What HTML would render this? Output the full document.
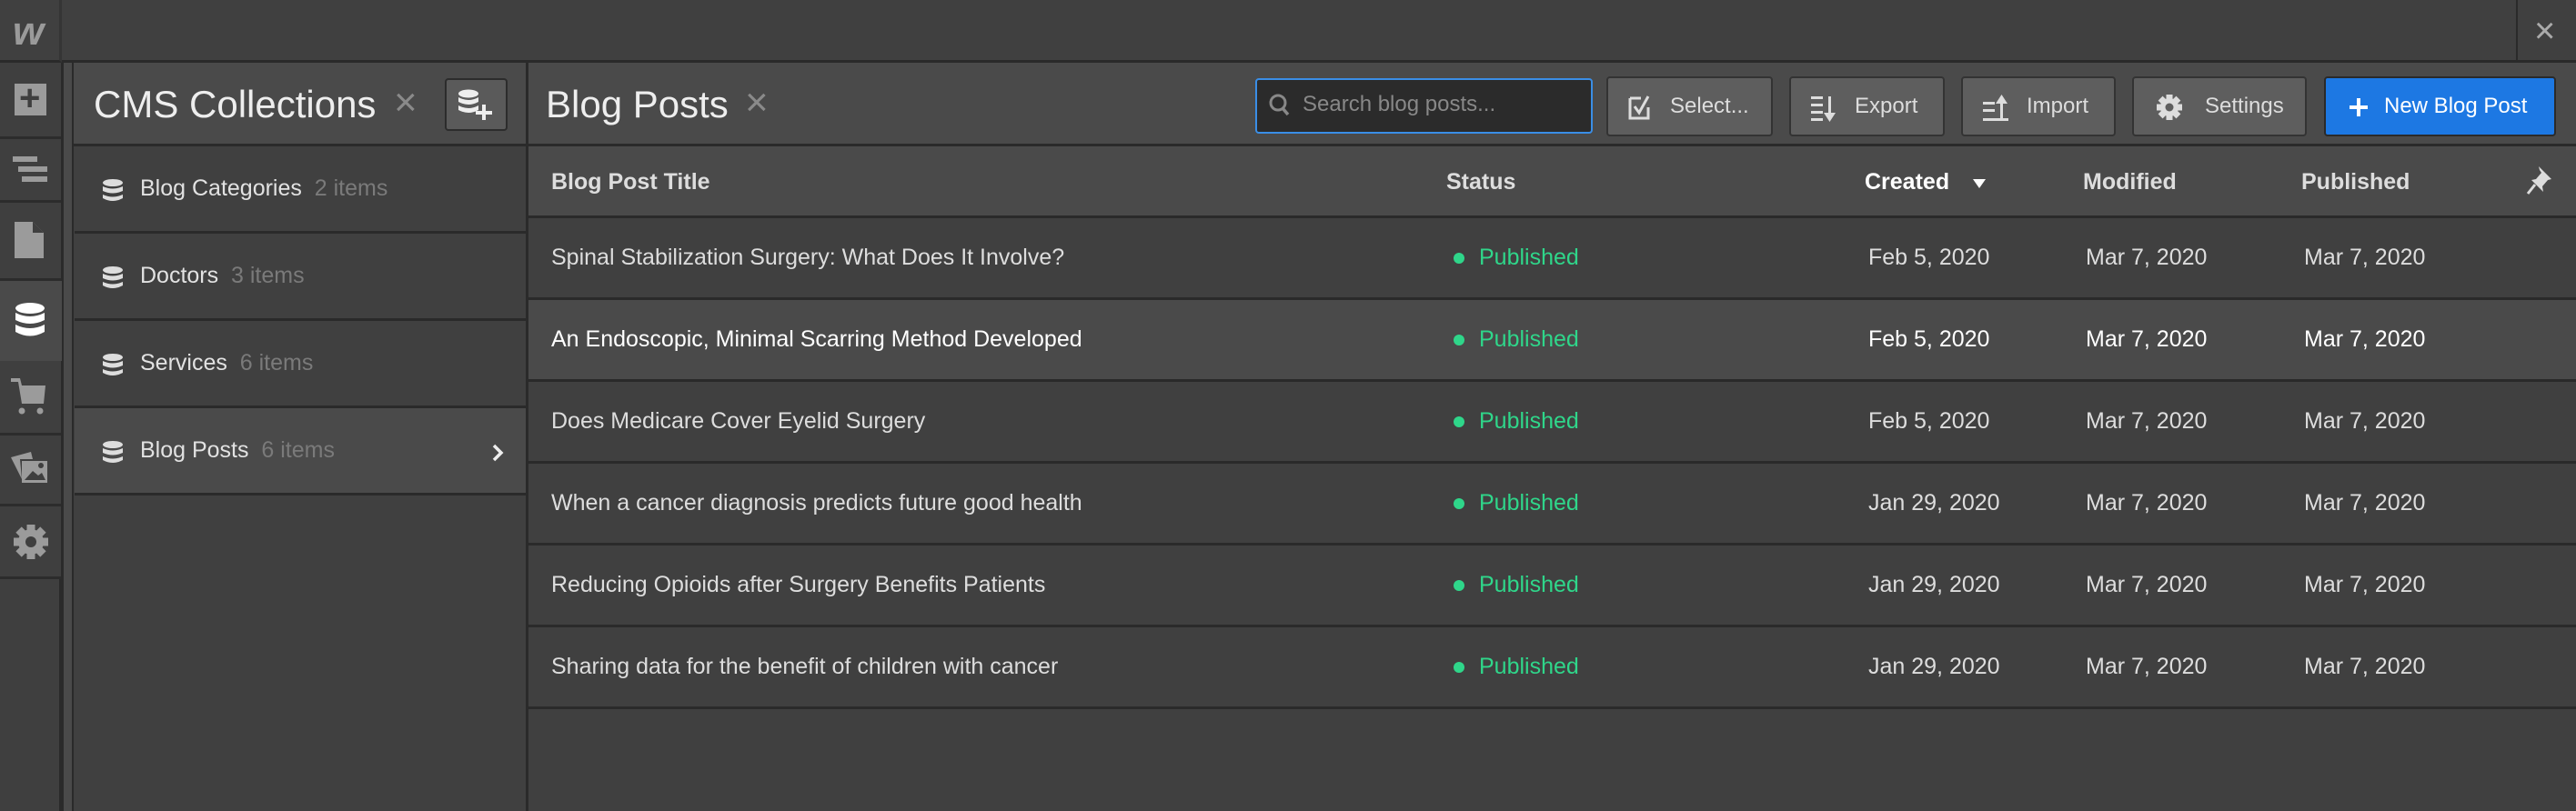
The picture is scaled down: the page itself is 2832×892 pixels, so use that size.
<!DOCTYPE html>
<html><head><meta charset="utf-8"><style>
*{box-sizing:border-box;margin:0;padding:0}
body{width:2832px;height:892px;background:#404040;font-family:"Liberation Sans",sans-serif;position:relative;overflow:hidden;color:#e6e6e6}
.a{position:absolute}
.t{position:absolute;white-space:nowrap}
.btn{position:absolute;top:84px;height:66px;background:#5e5e5e;border:2px solid #333;border-radius:4px;color:#ddd;font-size:24px;line-height:62px}
.row{position:absolute;left:581px;right:0;height:90px;border-bottom:3px solid #2a2a2a}
.row span{position:absolute;top:0;line-height:87px;font-size:25px;color:#ddd;white-space:nowrap}
.dot{position:absolute;left:1017px;top:38px;width:12px;height:12px;border-radius:50%;background:#2fd68a}
.tile{position:absolute;left:0;width:67px;border-bottom:3px solid #2c2c2c;background:#3f3f3f}
.li{position:absolute;left:82px;width:496px;height:96px;border-bottom:3px solid #2a2a2a;font-size:25px;line-height:93px}
.li b{font-weight:normal;color:#e2e2e2;position:absolute;left:72px}
.li i{font-style:normal;color:#7a7a7a}
</style></head><body>
<div class="a" style="left:0;top:0;width:2832px;height:69px;background:#404040;border-bottom:3px solid #2a2a2a"></div>
<div class="a" style="left:0;top:0;width:68px;height:69px;border-right:3px solid #353535;border-bottom:3px solid #2a2a2a"></div>
<div class="t" style="left:14px;top:10px;font-size:44px;font-weight:bold;font-style:italic;color:#9a9a9a;letter-spacing:-3px">w</div>
<div class="a" style="left:2766px;top:0;width:2px;height:69px;background:#2a2a2a"></div>
<div class="t" style="left:2786px;top:12px;font-size:40px;color:#aaa">×</div>
<div class="a" style="left:0;top:69px;width:68px;height:823px;background:#3f3f3f;border-right:3px solid #2a2a2a"></div>
<div class="tile" style="top:69px;height:84px"></div>
<div class="a" style="left:16px;top:92px;width:35px;height:35px;background:#9b9b9b"></div>
<div class="t" style="left:21px;top:86px;font-size:40px;color:#3f3f3f;font-weight:bold">+</div>
<div class="tile" style="top:153px;height:70px"></div>
<div class="a" style="left:14px;top:172px;width:27px;height:6px;background:#9b9b9b"></div>
<div class="a" style="left:20px;top:183px;width:32px;height:6px;background:#9b9b9b"></div>
<div class="a" style="left:24px;top:194px;width:28px;height:6px;background:#9b9b9b"></div>
<div class="tile" style="top:223px;height:86px"></div>
<svg class="a" style="left:16px;top:244px" width="33" height="41"><path d="M0 0H20L32 12V40H0Z" fill="#9b9b9b"/><path d="M20 0V12H32" fill="#3f3f3f"/></svg>
<div class="a" style="left:0;top:309px;width:80px;height:88px;background:#4a4a4a"></div>
<svg class="a" style="left:16px;top:332px" width="34" height="42"><g fill="#fff"><ellipse cx="17" cy="7" rx="16" ry="6"/><path d="M1 12Q17 20 33 12V20Q17 28 1 20Z"/><path d="M1 25Q17 33 33 25V33Q17 42 1 33Z"/></g></svg>
<div class="tile" style="top:397px;height:82px"></div>
<svg class="a" style="left:12px;top:416px" width="40" height="40"><g fill="#9b9b9b"><path d="M0 0H10L12 8H38L36 28H12L8 4H0Z"/><circle cx="12" cy="36" r="3.5"/><circle cx="32" cy="36" r="3.5"/></g></svg>
<div class="tile" style="top:479px;height:78px"></div>
<svg class="a" style="left:12px;top:497px" width="42" height="38"><g fill="#9b9b9b"><path d="M0 6L22 0L24 8H10L12 30Z"/><rect x="12" y="10" width="28" height="24"/></g><path d="M15 31L24 21L30 26L34 23L38 31Z" fill="#3f3f3f"/><circle cx="33" cy="15" r="3" fill="#3f3f3f"/></svg>
<div class="tile" style="top:557px;height:80px"></div>
<svg class="a" style="left:14px;top:576px" width="40" height="40" viewBox="-20 -20 40 40"><g fill="#9b9b9b"><circle r="14"/><rect x="-4.5" y="-19" width="9" height="38"/><rect x="-4.5" y="-19" width="9" height="38" transform="rotate(45)"/><rect x="-4.5" y="-19" width="9" height="38" transform="rotate(90)"/><rect x="-4.5" y="-19" width="9" height="38" transform="rotate(135)"/></g><circle r="6" fill="#3f3f3f"/></svg>
<div class="a" style="left:68px;top:69px;width:13px;height:823px;background:#4a4a4a;border-left:2px solid #2a2a2a;border-right:2px solid #2a2a2a"></div>
<div class="a" style="left:81px;top:69px;width:497px;height:92px;background:#4a4a4a;border-bottom:3px solid #2a2a2a"></div>
<div class="t" style="left:103px;top:91px;font-size:42px;color:#eee">CMS Collections</div>
<div class="t" style="left:433px;top:88px;font-size:44px;color:#8a8a8a">×</div>
<div class="a" style="left:489px;top:86px;width:69px;height:58px;background:#5a5a5a;border:2px solid #2c2c2c;border-radius:4px"></div>
<svg class="a" style="left:503px;top:98px" width="40" height="36"><g fill="#eee"><ellipse cx="12" cy="5" rx="11" ry="4.5"/><path d="M1 9Q12 15 23 9V14Q12 20 1 14Z"/><path d="M1 18Q12 24 23 18V23Q12 29 1 23Z"/><rect x="27" y="17" width="4" height="17"/><rect x="20" y="24" width="18" height="4"/></g></svg>
<div class="a" style="left:578px;top:69px;width:3px;height:823px;background:#2a2a2a"></div>

<div class="li" style="top:161px"><svg class="a" style="left:30px;top:36px" width="24" height="26"><g fill="#ddd"><ellipse cx="12" cy="4" rx="11" ry="4"/><path d="M1 8Q12 13 23 8V13Q12 18 1 13Z"/><path d="M1 17Q12 22 23 17V21Q12 27 1 21Z"/></g></svg><b>Blog Categories &nbsp;<i>2 items</i></b></div>
<div class="li" style="top:257px"><svg class="a" style="left:30px;top:36px" width="24" height="26"><g fill="#ddd"><ellipse cx="12" cy="4" rx="11" ry="4"/><path d="M1 8Q12 13 23 8V13Q12 18 1 13Z"/><path d="M1 17Q12 22 23 17V21Q12 27 1 21Z"/></g></svg><b>Doctors &nbsp;<i>3 items</i></b></div>
<div class="li" style="top:353px"><svg class="a" style="left:30px;top:36px" width="24" height="26"><g fill="#ddd"><ellipse cx="12" cy="4" rx="11" ry="4"/><path d="M1 8Q12 13 23 8V13Q12 18 1 13Z"/><path d="M1 17Q12 22 23 17V21Q12 27 1 21Z"/></g></svg><b>Services &nbsp;<i>6 items</i></b></div>
<div class="li" style="top:449px;background:#4a4a4a"><svg class="a" style="left:30px;top:36px" width="24" height="26"><g fill="#ddd"><ellipse cx="12" cy="4" rx="11" ry="4"/><path d="M1 8Q12 13 23 8V13Q12 18 1 13Z"/><path d="M1 17Q12 22 23 17V21Q12 27 1 21Z"/></g></svg><b>Blog Posts &nbsp;<i>6 items</i></b><svg class="a" style="left:458px;top:38px" width="14" height="22"><path d="M3 3L11 11L3 19" stroke="#eee" stroke-width="3.5" fill="none"/></svg></div>

<div class="a" style="left:581px;top:69px;right:0;height:92px;background:#4a4a4a;border-bottom:3px solid #2a2a2a"></div>
<div class="t" style="left:600px;top:91px;font-size:42px;color:#eee">Blog Posts</div>
<div class="t" style="left:819px;top:88px;font-size:44px;color:#8a8a8a">×</div>
<div class="a" style="left:1380px;top:86px;width:371px;height:61px;background:#2b2b2b;border:2px solid #3a8ee6;border-radius:4px"></div>
<svg class="a" style="left:1395px;top:103px" width="24" height="26"><circle cx="10" cy="10" r="8" stroke="#888" stroke-width="3" fill="none"/><path d="M15 16L21 23" stroke="#888" stroke-width="3.5"/></svg>
<div class="t" style="left:1432px;top:101px;font-size:24px;color:#888">Search blog posts...</div>
<div class="btn" style="left:1766px;width:183px"><svg class="a" style="left:22px;top:18px" width="26" height="28"><path d="M2 4H14M2 4V26H22V14" stroke="#ddd" stroke-width="3" fill="none"/><path d="M7 13L12 20L22 2" stroke="#ddd" stroke-width="3" fill="none"/></svg><span class="a" style="left:68px">Select...</span></div>
<div class="btn" style="left:1967px;width:171px"><svg class="a" style="left:22px;top:18px" width="30" height="30"><g fill="#ddd"><rect x="0" y="2" width="13" height="3"/><rect x="0" y="10" width="13" height="3"/><rect x="0" y="18" width="13" height="3"/><rect x="0" y="26" width="13" height="3"/><rect x="19" y="2" width="3" height="20"/><path d="M14 20H27L20.5 30Z"/></g></svg><span class="a" style="left:70px">Export</span></div>
<div class="btn" style="left:2156px;width:170px"><svg class="a" style="left:22px;top:18px" width="30" height="30"><g fill="#ddd"><rect x="0" y="8" width="13" height="3"/><rect x="0" y="16" width="13" height="3"/><rect x="0" y="26" width="28" height="3"/><rect x="19" y="8" width="3" height="18"/><path d="M14 10H27L20.5 0Z"/></g></svg><span class="a" style="left:70px">Import</span></div>
<div class="btn" style="left:2344px;width:192px"><svg class="a" style="left:24px;top:17px" width="30" height="30" viewBox="-15 -15 30 30"><g fill="#ddd"><circle r="10"/><rect x="-3.5" y="-14" width="7" height="28"/><rect x="-3.5" y="-14" width="7" height="28" transform="rotate(45)"/><rect x="-3.5" y="-14" width="7" height="28" transform="rotate(90)"/><rect x="-3.5" y="-14" width="7" height="28" transform="rotate(135)"/></g><circle r="4.5" fill="#5e5e5e"/></svg><span class="a" style="left:78px">Settings</span></div>
<div class="btn" style="left:2555px;width:255px;background:#1d78e3;border-color:#2a2a2a;color:#fff"><svg class="a" style="left:26px;top:22px" width="20" height="20"><rect x="8" y="0" width="4" height="20" fill="#fff"/><rect x="0" y="8" width="20" height="4" fill="#fff"/></svg><span class="a" style="left:64px">New Blog Post</span></div>

<div class="a" style="left:581px;top:161px;right:0;height:79px;background:#4a4a4a;border-bottom:3px solid #2a2a2a;font-size:25px;font-weight:bold;color:#ddd">
<span class="t" style="left:25px;top:25px">Blog Post Title</span>
<span class="t" style="left:1009px;top:25px">Status</span>
<span class="t" style="left:1469px;top:25px;color:#fff">Created</span>
<svg class="a" style="left:1588px;top:35px" width="14" height="12"><path d="M0 1H14L7 11Z" fill="#fff"/></svg>
<span class="t" style="left:1709px;top:25px">Modified</span>
<span class="t" style="left:1949px;top:25px">Published</span>
<svg class="a" style="left:2196px;top:18px" width="32" height="36"><path d="M14 4L28 18L24 19L18 26L19 32L6 19L11 18L17 11L15 8Z" fill="#ddd"/><path d="M10 24L2 34" stroke="#ddd" stroke-width="3"/></svg>
</div>

<div class="row" style="top:240px"><span style="left:25px">Spinal Stabilization Surgery: What Does It Involve?</span><i class="dot"></i><span style="left:1045px;color:#2fd68a">Published</span><span style="left:1473px">Feb 5, 2020</span><span style="left:1712px">Mar 7, 2020</span><span style="left:1952px">Mar 7, 2020</span></div>
<div class="row" style="top:330px;background:#4a4a4a"><span style="left:25px;color:#fff">An Endoscopic, Minimal Scarring Method Developed</span><i class="dot"></i><span style="left:1045px;color:#2fd68a">Published</span><span style="left:1473px;color:#fff">Feb 5, 2020</span><span style="left:1712px;color:#fff">Mar 7, 2020</span><span style="left:1952px;color:#fff">Mar 7, 2020</span></div>
<div class="row" style="top:420px"><span style="left:25px">Does Medicare Cover Eyelid Surgery</span><i class="dot"></i><span style="left:1045px;color:#2fd68a">Published</span><span style="left:1473px">Feb 5, 2020</span><span style="left:1712px">Mar 7, 2020</span><span style="left:1952px">Mar 7, 2020</span></div>
<div class="row" style="top:510px"><span style="left:25px">When a cancer diagnosis predicts future good health</span><i class="dot"></i><span style="left:1045px;color:#2fd68a">Published</span><span style="left:1473px">Jan 29, 2020</span><span style="left:1712px">Mar 7, 2020</span><span style="left:1952px">Mar 7, 2020</span></div>
<div class="row" style="top:600px"><span style="left:25px">Reducing Opioids after Surgery Benefits Patients</span><i class="dot"></i><span style="left:1045px;color:#2fd68a">Published</span><span style="left:1473px">Jan 29, 2020</span><span style="left:1712px">Mar 7, 2020</span><span style="left:1952px">Mar 7, 2020</span></div>
<div class="row" style="top:690px"><span style="left:25px">Sharing data for the benefit of children with cancer</span><i class="dot"></i><span style="left:1045px;color:#2fd68a">Published</span><span style="left:1473px">Jan 29, 2020</span><span style="left:1712px">Mar 7, 2020</span><span style="left:1952px">Mar 7, 2020</span></div>
</body></html>
